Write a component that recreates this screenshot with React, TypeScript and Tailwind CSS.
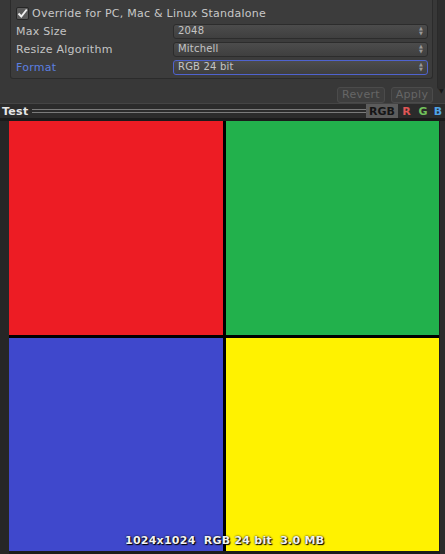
import React from "react";

const font = { fontFamily: '"DejaVu Sans", Verdana, sans-serif' };

function Dropdown({ value, active }: { value: string; active?: boolean }) {
  return (
    <div
      className={`flex h-[15px] w-[255px] items-center justify-between rounded-[3px] border bg-gradient-to-b from-[#4c4c4c] to-[#3f3f3f] pl-[4px] pr-[4px] text-[10px] tracking-[0.2px] text-[#c4c4c4] ${
        active ? "border-[#4f63cf]" : "border-[#2c2c2c]"
      }`}
    >
      <span className="leading-none">{value}</span>
      <span className="flex flex-col items-center leading-none text-[#9a9a9a]">
        <span className="text-[5px]">▲</span>
        <span className="text-[5px]">▼</span>
      </span>
    </div>
  );
}

function Row({ label, value, active }: { label: string; value: string; active?: boolean }) {
  return (
    <div className="flex h-[18px] items-center">
      <span
        className={`w-[157px] text-[11px] leading-none tracking-[0.25px] ${
          active ? "text-[#5b7fe0]" : "text-[#c4c4c4]"
        }`}
      >
        {label}
      </span>
      <Dropdown value={value} active={active} />
    </div>
  );
}

export default function App() {
  const quads = ["bg-[#ed1c24]", "bg-[#22b14c]", "bg-[#3f48cc]", "bg-[#fff200]"];

  return (
    <div className="flex h-[554px] w-[445px] flex-col overflow-hidden bg-[#383838]" style={font}>
      {/* inspector settings */}
      <div className="flex">
        <div className="flex-1 pl-[10px] pr-[4px]">
          <div className="h-[79px] rounded-b-[3px] border border-t-0 border-[#2b2b2b] bg-[#3c3c3c] pl-[5px] pt-[5px]">
            <div className="flex h-[17px] items-center gap-[3px]">
              <span className="flex h-[13px] w-[13px] items-center justify-center rounded-[2px] border border-[#262626] bg-[#5a5a5a]">
                <svg width="11" height="11" viewBox="0 0 11 11">
                  <path d="M1.5 5.5 L4.3 8.5 L9.8 1.5" fill="none" stroke="#f0f0f0" strokeWidth="2" />
                </svg>
              </span>
              <span className="text-[11px] leading-none tracking-[0.25px] text-[#c8c8c8]">
                Override for PC, Mac &amp; Linux Standalone
              </span>
            </div>
            <Row label="Max Size" value="2048" />
            <Row label="Resize Algorithm" value="Mitchell" />
            <Row label="Format" value="RGB 24 bit" active />
          </div>
          <div className="flex h-[24px] items-center justify-end gap-[6px] pt-[8px]">
            <span className="flex h-[16px] w-[48px] items-center justify-center rounded-[3px] border border-[#4b4b4b] bg-[#3e3e3e] text-[11px] tracking-[0.3px] text-[#666666]">
              Revert
            </span>
            <span className="flex h-[16px] w-[42px] items-center justify-center rounded-[3px] border border-[#4b4b4b] bg-[#3e3e3e] text-[11px] tracking-[0.3px] text-[#666666]">
              Apply
            </span>
          </div>
        </div>
        <div className="relative w-[8px]">
          <div className="h-[90px] rounded-b-[4px] border-l border-[#2a2a2a] bg-[#2e2e2e]" />
          <span className="absolute left-[2px] top-[88px] text-[6px] leading-none text-[#1a1a1a]">▼</span>
        </div>
      </div>

      {/* preview header */}
      <div className="flex h-[15px] items-center border-t border-[#444444] bg-[#2b2b2b]">
        <span className="pl-[2px] pr-[3px] text-[11px] font-bold leading-none tracking-[0.3px] text-[#e6e6e6]">
          Test
        </span>
        <div className="flex flex-1 flex-col gap-[2px]">
          <div className="h-px bg-[#7a7a7a]" />
          <div className="h-px bg-[#7a7a7a]" />
        </div>
        <span className="flex h-full w-[32px] items-center justify-center bg-[#5c5c5c] text-[11px] font-bold leading-none text-[#151515]">
          RGB
        </span>
        <span className="w-[17px] text-center text-[11px] font-bold leading-none text-[#e05656]">R</span>
        <span className="w-[16px] text-center text-[11px] font-bold leading-none text-[#72c25c]">G</span>
        <span className="w-[14px] text-center text-[11px] font-bold leading-none text-[#4fa3e6]">B</span>
      </div>

      {/* texture preview */}
      <div className="relative flex flex-1 bg-[#1b1b1b] pt-[3px]">
        <div className="w-[9px] bg-[#262626]" />
        <div className="grid h-[430px] w-[430px] grid-cols-2 gap-[3px] bg-[#000000]">
          {quads.map((q, i) => (
            <div key={i} className={q} />
          ))}
        </div>
        <div className="ml-[1px] flex-1 bg-[#2b2b2b]" />
        <span
          className="absolute bottom-[8px] left-[125px] whitespace-pre text-[11px] font-bold leading-none tracking-[0.25px] text-[#f2f2f2]"
          style={{ textShadow: "1px 1px 1px #000, 0 0 2px #000" }}
        >
          1024x1024  RGB 24 bit  3.0 MB
        </span>
      </div>
    </div>
  );
}
